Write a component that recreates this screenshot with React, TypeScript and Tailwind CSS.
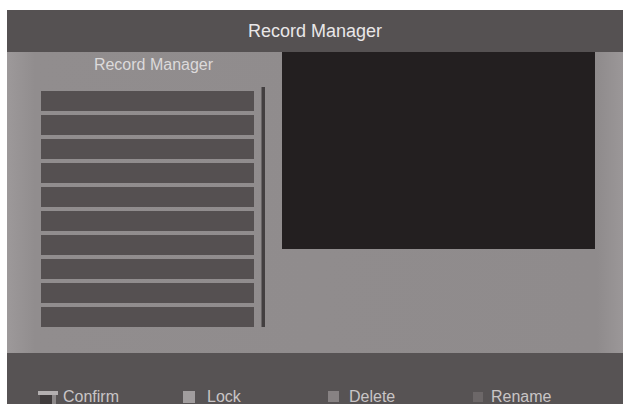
import React from "react";

const rows = Array.from({ length: 10 }, (_, i) => i);

function ConfirmIcon() {
  return (
    <svg width="24" height="14" viewBox="0 0 24 14" className="mr-[1px]">
      <rect x="0" y="1" width="20" height="4" fill="#b3afb0" />
      <rect x="2" y="5" width="12" height="9" fill="#3f3b3c" />
      <rect x="14" y="5" width="4" height="9" fill="#8c8889" />
    </svg>
  );
}

const footerItems = [
  { label: "Confirm", icon: <ConfirmIcon />, gap: "gap-0" },
  { label: "Lock", icon: <span className="h-[12px] w-[12px] bg-[#a19d9e]" />, gap: "gap-[12px]" },
  { label: "Delete", icon: <span className="h-[11px] w-[11px] bg-[#878283]" />, gap: "gap-[10px]" },
  { label: "Rename", icon: <span className="h-[10px] w-[10px] bg-[#6c6768]" />, gap: "gap-[8px]" },
];

export default function App() {
  return (
    <div className="h-[406px] w-[629px] overflow-hidden bg-white pl-[7px] pr-[6px] pt-[10px] font-['Liberation_Sans',Arial,sans-serif]">
      <div className="flex h-[394px] flex-col">
        <div className="flex h-[42px] items-center justify-center bg-[#555152] text-[18px] text-[#e9e7e8]">
          Record Manager
        </div>

        <div className="flex h-[301px] bg-[linear-gradient(90deg,#9d999a_0px,#918d8e_28px,#8f8b8c_calc(100%-26px),#9b9798_100%)]">
          <div className="ml-[34px] flex w-[225px] flex-col">
            <p className="mt-[4px] h-[18px] text-center text-[16px] leading-[18px] text-[#dcdadb]">
              Record Manager
            </p>
            <div className="mt-[13px] flex gap-[7px]">
              <div className="mt-[4px] flex w-[213px] flex-col gap-[4px]">
                {rows.map((r) => (
                  <div key={r} className="h-[20px] bg-[#555051]" />
                ))}
              </div>
              <div className="h-[240px] w-[4px] border-l border-[#6a6667] bg-[#433f40]" />
            </div>
          </div>
          <div className="ml-[16px] h-[197px] w-[313px] bg-[#231f20]" />
        </div>

        <div className="flex h-[51px] overflow-hidden bg-[#575354] pl-[31px] pt-[36px]">
          {footerItems.map((item) => (
            <div key={item.label} className={`flex h-[15px] w-[145px] items-center ${item.gap}`}>
              {item.icon}
              <span className="text-[16px] leading-[15px] text-[#c9c5c6]">{item.label}</span>
            </div>
          ))}
        </div>
      </div>
    </div>
  );
}
